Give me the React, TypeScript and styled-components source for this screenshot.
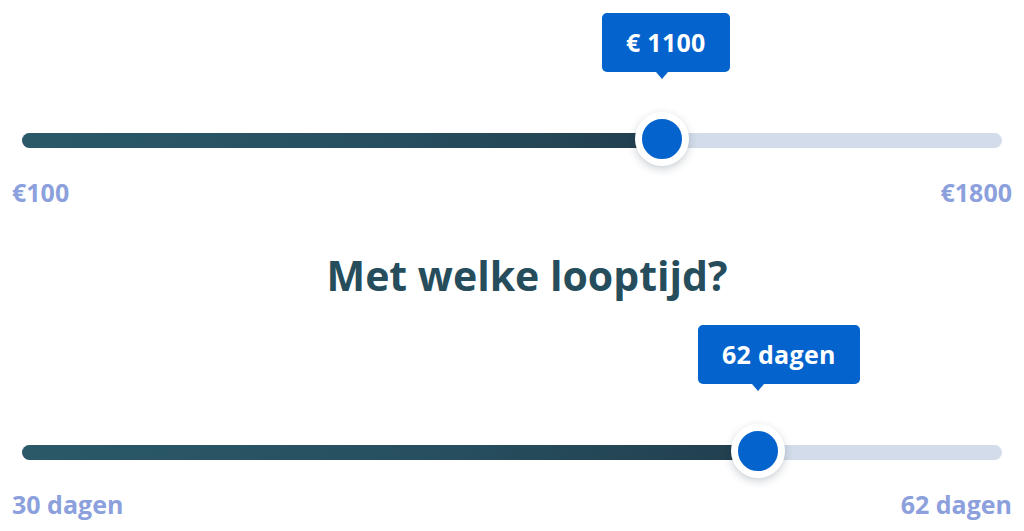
import React from "react";
import styled, { createGlobalStyle } from "styled-components";

const GlobalStyle = createGlobalStyle`
  html, body { margin: 0; padding: 0; background: #ffffff; }
  body { font-family: "Open Sans", "Noto Sans", sans-serif; }
  * { box-sizing: border-box; }
`;

const Page = styled.div`
  width: 1024px;
  height: 531px;
  overflow: hidden;
  padding: 0 12px;
  display: flex;
  flex-direction: column;
`;

const SliderBlock = styled.section<{ $top: number }>`
  display: flex;
  flex-direction: column;
  padding-top: ${(p) => p.$top}px;
`;

const Track = styled.div`
  position: relative;
  margin: 0 10px;
  height: 15px;
  border-radius: 8px;
  background: #d3dcea;
`;

const Fill = styled.div`
  height: 100%;
  border-radius: 8px;
  background: linear-gradient(90deg, #2b5968 0%, #264e5e 60%, #223f4e 100%);
`;

const Handle = styled.div`
  position: absolute;
  top: 50%;
  width: 0;
  height: 0;
`;

const Thumb = styled.div`
  position: absolute;
  left: -27px;
  top: -29px;
  width: 54px;
  height: 54px;
  border-radius: 50%;
  background: #0463cc;
  border: 7px solid #ffffff;
  box-shadow: 0 3px 9px rgba(20, 40, 60, 0.22);
`;

const Tooltip = styled.div`
  position: absolute;
  left: -60px;
  bottom: 69px;
  height: 59px;
  padding: 0 24px;
  display: flex;
  align-items: center;
  white-space: nowrap;
  background: #0463cc;
  color: #ffffff;
  border-radius: 5px;
  font-size: 25px;
  font-weight: 700;
  letter-spacing: 0.3px;
  line-height: 1;

  &::after {
    content: "";
    position: absolute;
    left: 54px;
    top: 100%;
    border-left: 6px solid transparent;
    border-right: 6px solid transparent;
    border-top: 7px solid #0463cc;
  }
`;

const Labels = styled.div`
  display: flex;
  justify-content: space-between;
  margin-top: 28px;
  font-size: 25px;
  line-height: 33px;
  font-weight: 700;
  color: #8ba0dc;
`;

const Heading = styled.h2`
  margin: 39px 0 0;
  padding-left: 30px;
  text-align: center;
  font-size: 41px;
  font-weight: 700;
  line-height: 54px;
  color: #264d5c;
`;

type SliderProps = {
  top: number;
  pct: number;
  value: string;
  min: string;
  max: string;
};

function Slider({ top, pct, value, min, max }: SliderProps) {
  return (
    <SliderBlock $top={top}>
      <Track>
        <Fill style={{ width: `${pct}%` }} />
        <Handle style={{ left: `${pct}%` }}>
          <Tooltip>{value}</Tooltip>
          <Thumb />
        </Handle>
      </Track>
      <Labels>
        <span>{min}</span>
        <span>{max}</span>
      </Labels>
    </SliderBlock>
  );
}

export default function App() {
  return (
    <>
      <GlobalStyle />
      <Page>
        <Slider top={133} pct={65.3} value="€ 1100" min="€100" max="€1800" />
        <Heading>Met welke looptijd?</Heading>
        <Slider top={143} pct={75.1} value="62 dagen" min="30 dagen" max="62 dagen" />
      </Page>
    </>
  );
}
